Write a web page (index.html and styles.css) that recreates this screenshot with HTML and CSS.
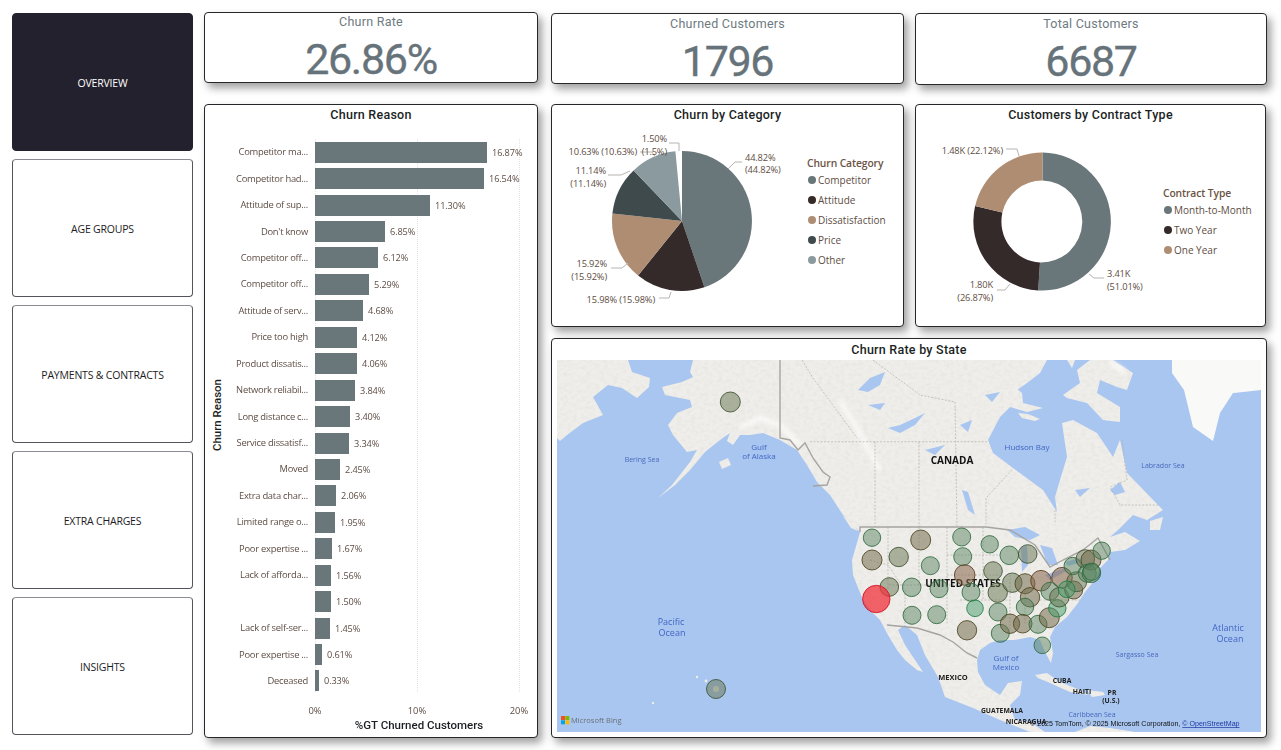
FILE: index.html
```html
<!DOCTYPE html>
<html lang="en">
<head>
<meta charset="utf-8">
<title>Customer Churn Overview</title>
<link rel="stylesheet" href="styles.css">
</head>
<body>
<div class="page">
  <nav class="nav">
    <a class="nav-btn active">OVERVIEW</a>
    <a class="nav-btn">AGE GROUPS</a>
    <a class="nav-btn">PAYMENTS &amp; CONTRACTS</a>
    <a class="nav-btn">EXTRA CHARGES</a>
    <a class="nav-btn">INSIGHTS</a>
  </nav>

  <div class="col-left">
    <section class="card kpi kpi-left">
      <h2 class="kpi-title">Churn Rate</h2>
      <div class="kpi-value">26.86%</div>
    </section>
    <section class="card bars-card">
      <h2 class="card-title">Churn Reason</h2>
      <div class="bars-body">
        <div class="y-title"><span>Churn Reason</span></div>
        <div class="plot">
          <span class="grid-line g0"></span><span class="grid-line g10"></span><span class="grid-line g20"></span>
          <div class="row"><span class="row-label">Competitor ma...</span><span class="bar" style="width:172px"></span><span class="row-val">16.87%</span></div>
          <div class="row"><span class="row-label">Competitor had...</span><span class="bar" style="width:169px"></span><span class="row-val">16.54%</span></div>
          <div class="row"><span class="row-label">Attitude of sup...</span><span class="bar" style="width:115px"></span><span class="row-val">11.30%</span></div>
          <div class="row"><span class="row-label">Don't know</span><span class="bar" style="width:70px"></span><span class="row-val">6.85%</span></div>
          <div class="row"><span class="row-label">Competitor off...</span><span class="bar" style="width:63px"></span><span class="row-val">6.12%</span></div>
          <div class="row"><span class="row-label">Competitor off...</span><span class="bar" style="width:54px"></span><span class="row-val">5.29%</span></div>
          <div class="row"><span class="row-label">Attitude of serv...</span><span class="bar" style="width:48px"></span><span class="row-val">4.68%</span></div>
          <div class="row"><span class="row-label">Price too high</span><span class="bar" style="width:42px"></span><span class="row-val">4.12%</span></div>
          <div class="row"><span class="row-label">Product dissatis...</span><span class="bar" style="width:42px"></span><span class="row-val">4.06%</span></div>
          <div class="row"><span class="row-label">Network reliabil...</span><span class="bar" style="width:40px"></span><span class="row-val">3.84%</span></div>
          <div class="row"><span class="row-label">Long distance c...</span><span class="bar" style="width:35px"></span><span class="row-val">3.40%</span></div>
          <div class="row"><span class="row-label">Service dissatisf...</span><span class="bar" style="width:34px"></span><span class="row-val">3.34%</span></div>
          <div class="row"><span class="row-label">Moved</span><span class="bar" style="width:25px"></span><span class="row-val">2.45%</span></div>
          <div class="row"><span class="row-label">Extra data char...</span><span class="bar" style="width:21px"></span><span class="row-val">2.06%</span></div>
          <div class="row"><span class="row-label">Limited range o...</span><span class="bar" style="width:20px"></span><span class="row-val">1.95%</span></div>
          <div class="row"><span class="row-label">Poor expertise ...</span><span class="bar" style="width:17px"></span><span class="row-val">1.67%</span></div>
          <div class="row"><span class="row-label">Lack of afforda...</span><span class="bar" style="width:16px"></span><span class="row-val">1.56%</span></div>
          <div class="row"><span class="row-label"></span><span class="bar" style="width:16px"></span><span class="row-val">1.50%</span></div>
          <div class="row"><span class="row-label">Lack of self-ser...</span><span class="bar" style="width:15px"></span><span class="row-val">1.45%</span></div>
          <div class="row"><span class="row-label">Poor expertise ...</span><span class="bar" style="width:7px"></span><span class="row-val">0.61%</span></div>
          <div class="row"><span class="row-label">Deceased</span><span class="bar" style="width:4px"></span><span class="row-val">0.33%</span></div>
          <div class="x-axis"><span>0%</span><span>10%</span><span>20%</span></div>
          <div class="x-title">%GT Churned Customers</div>
        </div>
      </div>
    </section>
  </div>

  <div class="col-right">
    <div class="kpi-row">
      <section class="card kpi kpi-mid">
        <h2 class="kpi-title">Churned Customers</h2>
        <div class="kpi-value">1796</div>
      </section>
      <section class="card kpi kpi-end">
        <h2 class="kpi-title">Total Customers</h2>
        <div class="kpi-value">6687</div>
      </section>
    </div>

    <div class="chart-row">
      <section class="card chart-card">
        <h2 class="card-title">Churn by Category</h2>
        <div class="chart-body">
          <svg class="chart-svg pie-svg" viewBox="552 126 252 200" width="252" height="200">
            <path class="c-a" d="M682 222V152A70 70 0 0 1 704.4 288.3Z"/>
            <path class="c-b" d="M682 222L704.4 288.3A70 70 0 0 1 638.1 276.5Z"/>
            <path class="c-c" d="M682 222L638.1 276.5A70 70 0 0 1 612.4 214.5Z"/>
            <path class="c-d" d="M682 222L612.4 214.5A70 70 0 0 1 633.6 171.4Z"/>
            <path class="c-e" d="M682 222L633.6 171.4A70 70 0 0 1 675.4 152.3Z"/>
            <polyline class="leader" points="728,170 735,163 742,163"/>
            <polyline class="leader" points="669,144 679,144 679,152"/>
            <polyline class="leader" points="640,153 652,153 656,159"/>
            <polyline class="leader" points="608,176 621,176 630,172"/>
            <polyline class="leader" points="611,269 622,269 628,264"/>
            <polyline class="leader" points="659,299 669,299 671,293"/>
            <text class="lbl" x="745" y="162">44.82%</text>
            <text class="lbl" x="745" y="174">(44.82%)</text>
            <text class="lbl end" x="667" y="143">1.50%</text>
            <text class="lbl end" x="637" y="156">10.63% (10.63%)</text>
            <text class="lbl end" x="667" y="156">(1.5%)</text>
            <text class="lbl end" x="606" y="175">11.14%</text>
            <text class="lbl end" x="606" y="188">(11.14%)</text>
            <text class="lbl end" x="607" y="268">15.92%</text>
            <text class="lbl end" x="607" y="281">(15.92%)</text>
            <text class="lbl end" x="655" y="304">15.98% (15.98%)</text>
          </svg>
          <div class="legend legend-pie">
            <div class="legend-title">Churn Category</div>
            <div class="legend-item"><i class="dot d-a"></i>Competitor</div>
            <div class="legend-item"><i class="dot d-b"></i>Attitude</div>
            <div class="legend-item"><i class="dot d-c"></i>Dissatisfaction</div>
            <div class="legend-item"><i class="dot d-d"></i>Price</div>
            <div class="legend-item"><i class="dot d-e"></i>Other</div>
          </div>
        </div>
      </section>
      <section class="card chart-card">
        <h2 class="card-title">Customers by Contract Type</h2>
        <div class="chart-body">
          <svg class="chart-svg donut-svg" viewBox="916 126 244 200" width="244" height="200">
            <path class="c-a" d="M1042.5 153.5A69 69 0 1 1 1038.2 291.4L1040 263.5A41 41 0 1 0 1042.5 181.5Z"/>
            <path class="c-b" d="M1038.2 291.4A69 69 0 0 1 975.1 207.1L1002.4 213.6A41 41 0 0 0 1040 263.5Z"/>
            <path class="c-c" d="M975.1 207.1A69 69 0 0 1 1042.5 153.5V181.5A41 41 0 0 0 1002.4 213.6Z"/>
            <polyline class="leader" points="1006,150 1017,150 1019,157"/>
            <polyline class="leader" points="1089,275 1094,279 1104,279"/>
            <polyline class="leader" points="997,291 1005,291 1010,285"/>
            <text class="lbl end" x="1003" y="155">1.48K (22.12%)</text>
            <text class="lbl" x="1107" y="278">3.41K</text>
            <text class="lbl" x="1107" y="291">(51.01%)</text>
            <text class="lbl end" x="993" y="289">1.80K</text>
            <text class="lbl end" x="993" y="302">(26.87%)</text>
          </svg>
          <div class="legend legend-donut">
            <div class="legend-title">Contract Type</div>
            <div class="legend-item"><i class="dot d-a"></i>Month-to-Month</div>
            <div class="legend-item"><i class="dot d-b"></i>Two Year</div>
            <div class="legend-item"><i class="dot d-c"></i>One Year</div>
          </div>
        </div>
      </section>
    </div>

    <section class="card map-card">
      <h2 class="card-title map-title">Churn Rate by State</h2>
      <div class="map">
        <svg class="map-svg" viewBox="557 360 704 372" width="704" height="372">
          <defs>
            <filter id="soft" x="-5%" y="-5%" width="110%" height="110%"><feGaussianBlur stdDeviation="0.5"/></filter>
            <filter id="terrain" x="0" y="0" width="100%" height="100%">
              <feTurbulence type="fractalNoise" baseFrequency="0.22 0.3" numOctaves="3" seed="4"/>
              <feColorMatrix values="0 0 0 0 .6  0 0 0 0 .6  0 0 0 0 .57  .45 0 0 0 -.17"/>
              <feComposite in2="SourceGraphic" operator="in"/>
            </filter>
            <filter id="glow" x="-30%" y="-30%" width="160%" height="160%"><feGaussianBlur stdDeviation="2"/></filter>
          </defs>
          <rect class="sea" x="557" y="360" width="704" height="372"/>
          <g filter="url(#soft)">
            <g id="land-shapes" class="land">
              <path d="M557 360H628L632 372L650 378L649 387L637 398L622 388L608 385L593 397L603 415L583 423L567 435L560 441L557 438Z"/>
              <path d="M693 360H1047L1040 373L1027 383L1017 390L1007 380L1022 393L1023 403L1043 408L1027 412L1010 407L1000 417L988 440L993 453L1013 468L1043 490L1057 512L1055 497L1060 480L1067 457L1062 423L1073 420L1097 433L1113 457L1120 440L1127 473L1160 507L1163 510L1147 520L1133 515L1118 530L1110 537L1125 532L1140 541L1125 550L1110 552L1108 560L1100 568L1095 580L1085 592L1078 603L1067 617L1055 627L1050 637L1053 653L1051 663L1045 652L1040 640L1030 637L1015 640L1000 640L990 643L980 650L977 660L978 672L985 685L1000 695L1008 683L1022 681L1020 695L1010 705L1012 712L1015 720L1030 722L1045 732H1030L1000 720L973 708L945 697L938 677L925 655L917 635L905 625L898 630L905 645L915 660L923 672L917 670L905 660L897 650L888 635L880 620L872 612L863 600L853 575L852 560L857 543L860 532L843 515L830 495L817 482L807 465L797 450L780 440L763 433L750 435L740 435L733 445L727 441L730 433L720 440L705 452L690 470L675 485L658 498L672 485L690 462L697 450L687 452L673 435L668 425L677 413L692 407L690 400L665 395L662 387L682 382L693 377L690 372Z"/>
              <path d="M1063 395L1080 383L1077 370L1090 360H1113L1133 373L1127 390L1117 387L1100 380L1097 393L1120 407L1120 422L1103 420L1087 403L1067 398Z"/>
              <path d="M1067 360H1075L1072 368Z"/>
              <path d="M1035 675L1047 673L1060 682L1080 690L1088 695L1070 692L1050 683L1038 678Z"/>
              <path d="M1087 690L1103 692L1105 695L1092 697Z"/>
              <path d="M1075 732L1090 726L1110 728L1135 732Z"/>
              <path d="M1150 521L1163 517L1160 530L1150 530Z"/>
              <path d="M1018 413L1028 414L1040 419L1035 421L1022 418Z"/>
              <path d="M719 462L728 458L731 465L722 469Z"/>
              <path d="M843 516L852 522L858 531L851 528Z"/>
              <circle cx="697" cy="677" r="1.2"/><circle cx="706" cy="681" r="1.4"/><circle cx="653" cy="703" r="1.2"/><circle cx="716" cy="689" r="3"/>
            </g>
            <use href="#land-shapes" filter="url(#terrain)"/>
            <path class="snow" d="M1172 360H1261V390L1233 393L1220 413L1213 441L1193 427L1184 390L1172 373Z"/>
            <g class="snow-glow" filter="url(#glow)">
              <path d="M740 428L760 418L780 425L800 445"/>
              <path d="M840 400L855 425L880 470"/>
              <path d="M1110 362L1125 372"/>
            </g>
            <g class="lakes">
              <path d="M858 390L870 378L885 372L880 385L868 392Z"/>
              <path d="M888 428L900 425L915 418L925 413L915 425L900 433Z"/>
              <path d="M868 405L885 403L880 410Z"/>
              <path d="M962 490L968 492L975 515L968 510Z"/>
              <path d="M925 450L945 445L935 455Z"/>
              <path d="M1075 490L1090 488L1080 497Z"/>
              <path d="M1110 490L1120 482L1125 492L1115 495Z"/>
              <path d="M1007 530L1025 527L1040 535L1030 540L1015 537Z"/>
              <path d="M1021 548L1027 545L1028 565L1022 572Z"/>
              <path d="M1040 545L1052 548L1058 565L1048 565Z"/>
              <path d="M1045 575L1065 568L1068 570L1050 580Z"/>
              <path d="M1065 562L1080 558L1082 562L1068 566Z"/>
              <path d="M960 425L972 420L968 432Z"/>
              <path d="M985 395L1000 392L992 402Z"/>
            </g>
            <g class="border-thin">
              <path d="M802 360L813 378L857 438"/>
              <path d="M873 360L920 395L955 402"/>
              <path d="M810 441.7H988"/>
              <path d="M875 441.7V527"/>
              <path d="M919 441.7V527"/>
              <path d="M955 402L957 527"/>
              <path d="M1012 470L986 498V524"/>
              <path d="M1055 510V522"/>
              <path d="M1122 440L1127 480L1110 487L1120 505L1160 505"/>
              <path d="M888 527V590"/>
              <path d="M919 527V585M889 585H960"/>
              <path d="M947 527V625"/>
              <path d="M947 555H1000M947 575H1000M960 600H1010"/>
              <path d="M983 527V600"/>
              <path d="M870 560L888 565L905 590V625"/>
              <path d="M1010 575V630M1025 590V625M1040 600H1080"/>
            </g>
            <g class="border-thick">
              <path d="M780 360V438L790 440L798 450L805 443L813 458L823 472L830 477L827 485L813 486"/>
              <path d="M860 532V527H986L1010 530L1035 545L1050 567L1063 560L1083 550L1098 538L1110 560"/>
              <path d="M887 625L917 628L940 635L953 642L967 653L977 658"/>
            </g>
          </g>
          <g class="map-labels">
            <text class="sea-sm" x="642" y="462">Bering Sea</text>
            <text class="sea-md" x="759" y="450">Gulf</text>
            <text class="sea-md" x="759" y="459">of Alaska</text>
            <text class="sea-md" x="1027" y="450">Hudson Bay</text>
            <text class="sea-sm" x="1163" y="468">Labrador Sea</text>
            <text class="sea-lg" x="671" y="625">Pacific</text>
            <text class="sea-lg" x="672" y="636">Ocean</text>
            <text class="sea-lg" x="1228" y="631">Atlantic</text>
            <text class="sea-lg" x="1230" y="642">Ocean</text>
            <text class="sea-md" x="1006" y="661">Gulf of</text>
            <text class="sea-md" x="1006" y="670">Mexico</text>
            <text class="sea-sm" x="1137" y="657">Sargasso Sea</text>
            <text class="sea-sm" x="1092" y="717">Caribbean Sea</text>
            <text class="pl-lg" x="952" y="464">CANADA</text>
            <text class="pl-lg" x="963" y="587">UNITED STATES</text>
            <text class="pl-sm" x="953" y="680">MEXICO</text>
            <text class="pl-xs" x="1062" y="683">CUBA</text>
            <text class="pl-xs" x="1082" y="694">HAITI</text>
            <text class="pl-xs" x="1112" y="695">PR</text>
            <text class="pl-xs" x="1111" y="703">(U.S.)</text>
            <text class="pl-xs" x="1002" y="713">GUATEMALA</text>
            <text class="pl-xs" x="1026" y="724">NICARAGUA</text>
          </g>
          <g class="bubbles">
            <circle class="o" cx="730.3" cy="402" r="10"/><circle class="o" cx="716" cy="689" r="9.5"/>
            <circle class="g" cx="872" cy="537.7" r="8.7"/><circle class="t" cx="920.7" cy="540" r="10"/><circle class="g" cx="961.7" cy="537" r="9"/><circle class="g" cx="989.7" cy="544.3" r="8.7"/>
            <circle class="t" cx="872" cy="560" r="10"/><circle class="o" cx="898.7" cy="557" r="9.7"/><circle class="g" cx="930.3" cy="565.7" r="9"/><circle class="g" cx="962.7" cy="556.7" r="9"/>
            <circle class="g" cx="1009.3" cy="555.3" r="9.3"/><circle class="o" cx="1027.7" cy="554" r="9.3"/><circle class="o" cx="993" cy="571" r="9.3"/><circle class="b" cx="964.7" cy="575" r="10.3"/>
            <circle class="o" cx="889.3" cy="587" r="9.3"/><circle class="g" cx="911.7" cy="587.3" r="9.3"/><circle class="g" cx="939" cy="588.7" r="9"/><circle class="g" cx="971" cy="592.3" r="9"/>
            <circle class="o" cx="997.7" cy="592.7" r="9.7"/><circle class="o" cx="1012.3" cy="582.7" r="9.7"/><circle class="t" cx="1025" cy="583.7" r="10"/><circle class="b" cx="1041" cy="580.7" r="10.3"/>
            <circle class="b" cx="1062" cy="577.7" r="10.3"/><circle class="g" cx="1050" cy="591.3" r="9"/><circle class="t" cx="1030" cy="597.3" r="9.7"/><circle class="g" cx="1025" cy="607" r="8.7"/>
            <circle class="v" cx="975" cy="608.3" r="8.3"/><circle class="g" cx="998" cy="612" r="9"/><circle class="g" cx="936.7" cy="614.7" r="9"/><circle class="g" cx="912" cy="615.3" r="9"/>
            <circle class="r" cx="876.3" cy="599" r="13.7"/><circle class="t" cx="967" cy="630.3" r="9.7"/><circle class="g" cx="1000.3" cy="633.3" r="9"/><circle class="t" cx="1010" cy="623.7" r="9.7"/>
            <circle class="t" cx="1022.7" cy="623.7" r="9.3"/><circle class="g" cx="1038" cy="624.3" r="9"/><circle class="t" cx="1049.3" cy="617.7" r="10"/><circle class="v" cx="1057.3" cy="608.3" r="8.7"/>
            <circle class="o" cx="1059.3" cy="597.3" r="9.7"/><circle class="t" cx="1073.7" cy="590" r="9"/><circle class="o" cx="1076.7" cy="581.7" r="10"/><circle class="v" cx="1066.7" cy="589.3" r="8.3"/>
            <circle class="g" cx="1072.7" cy="566" r="8.7"/><circle class="o" cx="1085.3" cy="559" r="9.3"/><circle class="t" cx="1091" cy="560" r="10"/><circle class="g" cx="1101.7" cy="550.7" r="8.7"/>
            <circle class="g" cx="1087.3" cy="573.3" r="9"/><circle class="g" cx="1091.3" cy="573.3" r="9.3"/><circle class="g" cx="1091.7" cy="571.7" r="8.7"/><circle class="g" cx="1042.3" cy="645.3" r="8.3"/>
          </g>
          <g class="ms-logo">
            <rect class="ms1" x="561" y="716" width="4" height="4"/><rect class="ms2" x="565.3" y="716" width="4" height="4"/>
            <rect class="ms3" x="561" y="720.3" width="4" height="4"/><rect class="ms4" x="565.3" y="720.3" width="4" height="4"/>
          </g>
          <text class="bing" x="571" y="723">Microsoft Bing</text>
          <text class="credit" x="1030" y="726">© 2025 TomTom, © 2025 Microsoft Corporation, <tspan class="credit-link">© OpenStreetMap</tspan></text>
        </svg>
      </div>
    </section>
  </div>
</div>
</body>
</html>
```
FILE: styles.css
```css
* { box-sizing: border-box; }
html, body { margin: 0; padding: 0; background: #fff; }
body { width: 1281px; height: 750px; overflow: hidden; font-family: "Open Sans", "Liberation Sans", sans-serif; }

.page { display: flex; align-items: flex-start; padding: 12px 0 0 12px; }

.nav { width: 181px; margin-top: 1px; display: flex; flex-direction: column; gap: 8px; flex: none; }
.nav-btn {
  height: 138px; display: flex; align-items: center; justify-content: center;
  border: 1px solid #55535c; border-top-color: #8d8c92; border-radius: 4px; color: #1c1b24;
  font-size: 10.5px; letter-spacing: -.2px; padding-top: 1px;
}
.nav-btn.active { background: #24212e; color: #fff; border-color: #24212e; padding-top: 2px; }

.card { background: #fff; border: 1px solid #25272a; border-radius: 4px; box-shadow: 4px 5px 8px rgba(0,0,0,.38); }

.col-left { width: 334px; margin-left: 11px; display: flex; flex-direction: column; gap: 21px; flex: none; }
.col-right { width: 716px; margin-left: 13px; display: flex; flex-direction: column; flex: none; padding-top: 1px; }

.kpi { display: flex; flex-direction: column; align-items: center; }
.kpi-left { height: 71px; }
.kpi-mid { height: 71px; }
.kpi-end { height: 72px; }
.kpi-title { margin: 0; font: 400 12.5px/14px Roboto, sans-serif; letter-spacing: .25px; color: #6d7a80; padding-top: 3px; }
.kpi-left .kpi-title { padding-top: 2px; }
.kpi-value { font: 400 43px/50px Roboto, sans-serif; letter-spacing: -1.3px; color: #66737a; margin-top: 5px; -webkit-text-stroke: .35px #66737a; }

.kpi-row { display: grid; grid-template-columns: 353px 352px; column-gap: 11px; align-items: start; height: 91px; }
.chart-row { display: grid; grid-template-columns: 353px 351px; column-gap: 11px; }
.chart-card { height: 223px; }

.card-title { margin: 0; height: 20px; text-align: center; font: 500 12.5px/20px Roboto, sans-serif; letter-spacing: .25px; color: #1b1f24; }

.bars-card { height: 634px; }
.bars-body { display: flex; margin-top: 14px; position: relative; }
.y-title { width: 16px; margin-left: 4px; flex: none; height: 553px; display: flex; align-items: center; justify-content: center; }
.y-title span { writing-mode: vertical-rl; transform: rotate(180deg); font: 500 11.5px/14px Roboto, sans-serif; color: #1b1f24; }

.plot { position: relative; flex: 1; }
.grid-line { position: absolute; top: 0; height: 553px; border-left: 1px dotted #e3e3e3; }
.g0 { left: 90px; } .g10 { left: 192px; } .g20 { left: 294px; }
.row { display: flex; align-items: center; height: 26.45px; position: relative; }
.row-label { width: 83px; margin-right: 7px; flex: none; text-align: right; font-size: 9.4px; line-height: 12px; letter-spacing: -.25px; color: #5e4d44; white-space: nowrap; }
.bar { height: 21px; background: #69767a; flex: none; }
.row-val { margin-left: 5px; font-size: 9.2px; color: #5e4d44; letter-spacing: -.1px; }

.x-axis { position: relative; height: 14px; margin-top: 10px; font-size: 9.4px; line-height: 14px; color: #5e4d44; display: grid; grid-template-columns: repeat(3, 102px); margin-left: 39px; text-align: center; }
.x-title { text-align: center; font: 500 11.5px/14px Roboto, sans-serif; color: #1b1f24; margin: 0 0 0 90px; width: 208px; white-space: nowrap; }

.chart-body { display: flex; align-items: flex-start; }
.chart-svg { display: block; flex: none; }
.c-a { fill: #69767a; } .c-b { fill: #352a2a; } .c-c { fill: #af8d72; } .c-d { fill: #3f4a4c; } .c-e { fill: #8a9a9f; }
.leader { fill: none; stroke: #b8b4b0; stroke-width: 1; }
.lbl { font: 9.3px "Open Sans", sans-serif; fill: #5e4d44; letter-spacing: -.15px; }
.lbl.end { text-anchor: end; }

.legend { font-size: 10px; color: #5e4d44; }
.legend-pie { padding-top: 31px; margin-left: 3px; }
.legend-donut { padding-top: 61px; margin-left: 3px; }
.legend-title { font-weight: 600; font-size: 10.3px; line-height: 14px; letter-spacing: -.1px; color: #6b5344; }
.legend-item { display: flex; align-items: center; height: 20px; white-space: nowrap; }
.dot { width: 8px; height: 8px; border-radius: 50%; margin: 0 2px 0 1px; flex: none; }
.d-a { background: #69767a; } .d-b { background: #352a2a; } .d-c { background: #af8d72; } .d-d { background: #3f4a4c; } .d-e { background: #8a9a9f; }

.map-card { height: 400px; margin-top: 11px; padding: 0 5px; }
.map-title { height: 21px; line-height: 21px; }
.map { width: 704px; height: 372px; overflow: hidden; }
.map-svg { display: block; }
.sea { fill: #a9c6f0; }
.land path, .land circle { fill: #efeeea; }
.snow { fill: #f9f9f7; }
.snow-glow path { fill: none; stroke: #fbfbfa; stroke-width: 4; }
.lakes path { fill: #a9c6f0; }
.border-thin path { fill: none; stroke: #b3b1aa; stroke-width: .7; stroke-dasharray: 2 1.5; }
.border-thick path { fill: none; stroke: #a5a4a0; stroke-width: 1.4; }

.map-labels text { text-anchor: middle; font-family: "Open Sans", sans-serif; }
.sea-sm { font-size: 7px; fill: #4a68bd; }
.sea-md { font-size: 8px; fill: #4265c4; }
.sea-lg { font-size: 9px; fill: #4265c4; }
.pl-lg { font-size: 10px; font-weight: 700; fill: #111; }
.pl-sm { font-size: 7.5px; font-weight: 700; fill: #222; }
.pl-xs { font-size: 6.8px; font-weight: 700; fill: #222; }

.bubbles circle { stroke-width: 1; stroke-opacity: .85; }
.bubbles .g { fill: rgba(85,130,95,.48); stroke: #2e6a3e; }
.bubbles .v { fill: rgba(70,155,105,.5); stroke: #1f7a45; }
.bubbles .o { fill: rgba(105,118,85,.52); stroke: #3d5130; }
.bubbles .t { fill: rgba(112,104,70,.52); stroke: #4a4320; }
.bubbles .b { fill: rgba(135,100,72,.55); stroke: #57391f; }
.bubbles .r { fill: rgba(240,50,60,.75); stroke: #d01020; }

.ms1 { fill: #f25022; } .ms2 { fill: #7fba00; } .ms3 { fill: #00a4ef; } .ms4 { fill: #ffb900; }
.bing { font: 7.5px "Open Sans", sans-serif; fill: #6a7078; }
.credit { font: 7.1px "Liberation Sans", sans-serif; fill: #111; }
.credit-link { fill: #2036a0; text-decoration: underline; }
```
